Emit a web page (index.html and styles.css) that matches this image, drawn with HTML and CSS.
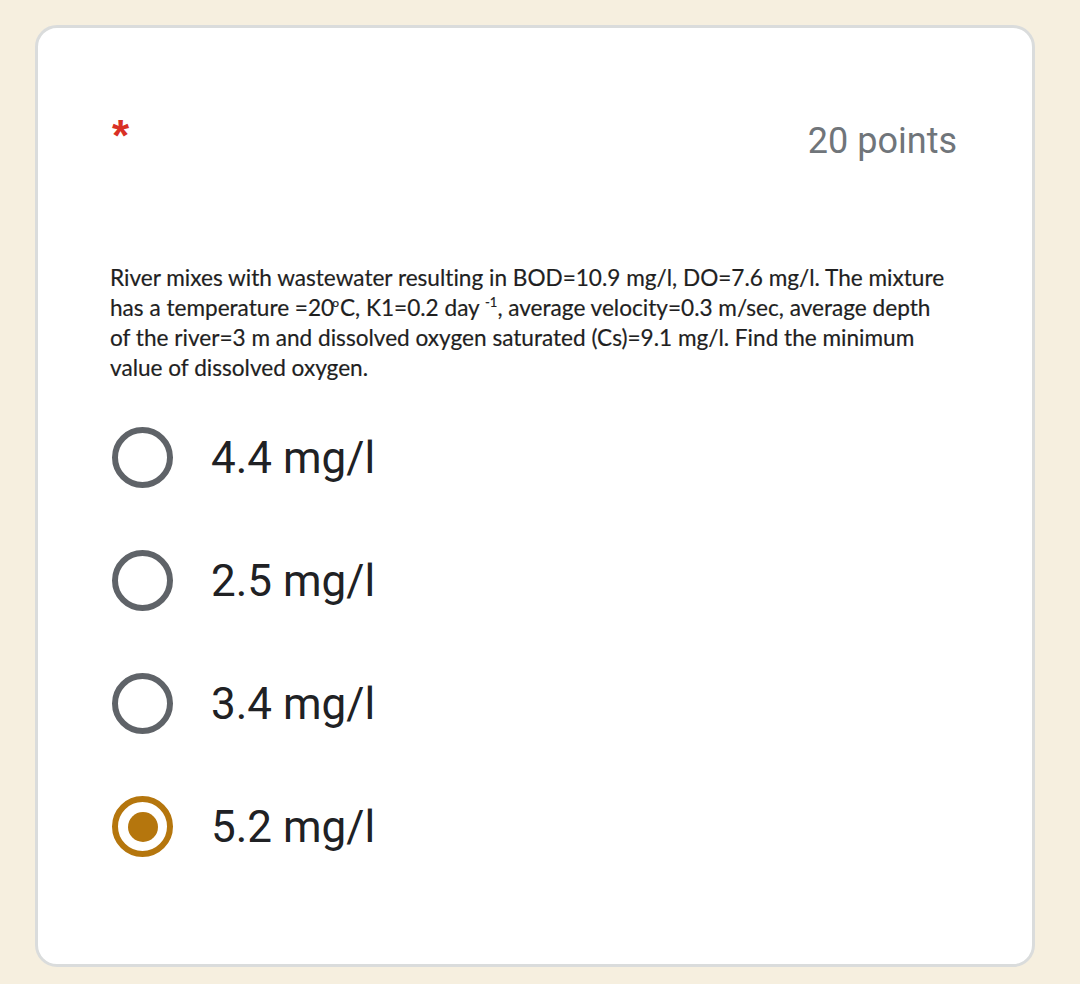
FILE: index.html
```html
<!DOCTYPE html>
<html>
<head>
<meta charset="utf-8">
<link rel="stylesheet" href="styles.css">
</head>
<body>
<div class="card">
  <div class="header">
    <span class="req">*</span>
    <span class="points">20 points</span>
  </div>
  <p class="question">River mixes with wastewater resulting in BOD=10.9 mg/l, DO=7.6 mg/l. The mixture<br>has a temperature =20<sup class="deg">o</sup>C, K1=0.2 day <sup class="exp">-1</sup>, average velocity=0.3 m/sec, average depth<br>of the river=3 m and dissolved oxygen saturated (Cs)=9.1 mg/l. Find the minimum<br>value of dissolved oxygen.</p>
  <div class="options">
    <div class="option"><span class="radio"></span><span class="label">4.4 mg/l</span></div>
    <div class="option"><span class="radio"></span><span class="label">2.5 mg/l</span></div>
    <div class="option"><span class="radio"></span><span class="label">3.4 mg/l</span></div>
    <div class="option"><span class="radio checked"><span class="dot"></span></span><span class="label">5.2 mg/l</span></div>
  </div>
</div>
</body>
</html>
```
FILE: styles.css
```css
html, body {
  margin: 0;
  padding: 0;
}
body {
  background: #f6efdf;
  width: 1080px;
  height: 984px;
  overflow: hidden;
  font-family: Roboto, "Liberation Sans", sans-serif;
}
.card {
  box-sizing: border-box;
  margin: 25px 0 0 35px;
  width: 1000px;
  height: 942px;
  background: #ffffff;
  border: 3px solid #dadcdc;
  border-radius: 22px;
  padding: 80px 75px 0 74px;
}
.header {
  display: flex;
  justify-content: space-between;
  align-items: flex-start;
  height: 42px;
  padding-top: 12px;
}
.req {
  color: #d93025;
  font-family: "Liberation Sans", sans-serif;
  font-size: 44px;
  line-height: 44px;
  margin-top: -6px;
  font-weight: bold;
}
.points {
  color: #70757a;
  font-size: 36px;
  line-height: 42px;
}
.question {
  margin: 101px 0 0 -2px;
  font-family: Lato, "Open Sans", sans-serif;
  font-size: 22.6px;
  line-height: 30px;
  color: #1f1f1f;
  white-space: nowrap;
  font-variant-ligatures: none;
  -webkit-text-stroke: 0.2px #1f1f1f;
}
.deg {
  font-size: 12px;
  vertical-align: 9px;
  line-height: 0;
  margin-left: -2px;
  margin-right: 1px;
}
.exp {
  font-size: 13px;
  vertical-align: 9px;
  line-height: 0;
}
.options {
  display: flex;
  flex-direction: column;
  gap: 62px;
  margin-top: 44px;
}
.option {
  display: flex;
  align-items: center;
  height: 61px;
}
.radio {
  box-sizing: border-box;
  width: 61px;
  height: 61px;
  border: 6px solid #5f6368;
  border-radius: 50%;
  display: flex;
  align-items: center;
  justify-content: center;
  flex: none;
}
.radio.checked {
  border-color: #b5760d;
}
.dot {
  width: 30px;
  height: 30px;
  border-radius: 50%;
  background: #b5760d;
}
.label {
  margin-left: 38px;
  font-size: 44px;
  line-height: 52px;
  color: #202124;
}
```
